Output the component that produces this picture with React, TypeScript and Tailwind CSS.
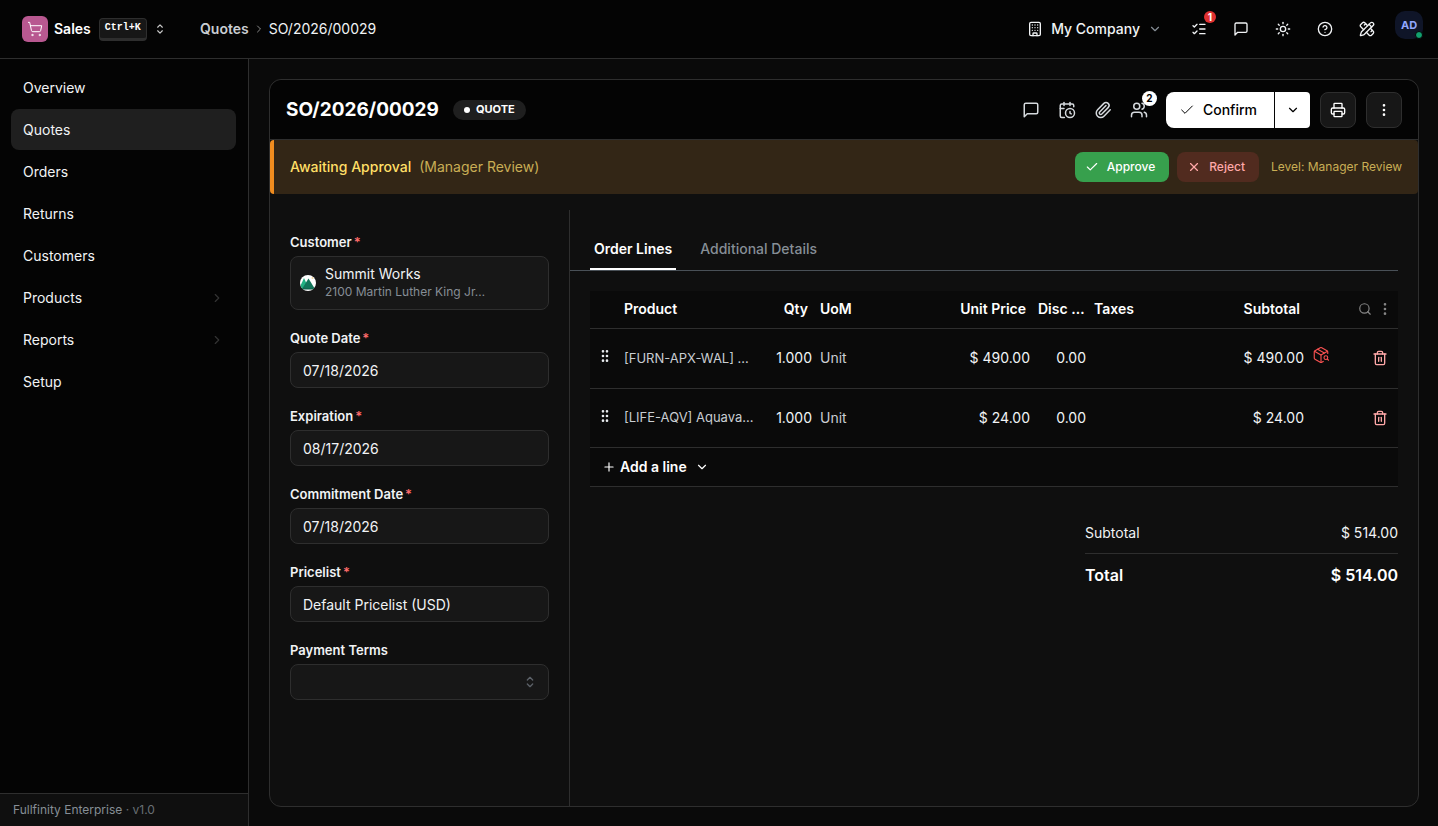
import React, { useState } from "react";
import {
  Building,
  CalendarClock,
  Check,
  ChevronDown,
  ChevronRight,
  CircleHelp,
  EllipsisVertical,
  GripVertical,
  ListChecks,
  PackageSearch,
  Paperclip,
  PencilRuler,
  Plus,
  Printer,
  Search,
  ShoppingCart,
  Sun,
  Trash2,
  Users,
  X,
} from "lucide-react";
import { TbSelector } from "react-icons/tb";

type NavItem = { label: string; hasChildren?: boolean };

type OrderLine = {
  id: number;
  product: string;
  qty: string;
  uom: string;
  price: string;
  disc: string;
  subtotal: string;
  shortage?: boolean;
};

const navItems: NavItem[] = [
  { label: "Overview" },
  { label: "Quotes" },
  { label: "Orders" },
  { label: "Returns" },
  { label: "Customers" },
  { label: "Products", hasChildren: true },
  { label: "Reports", hasChildren: true },
  { label: "Setup" },
];

const orderLines: OrderLine[] = [
  {
    id: 1,
    product: "[FURN-APX-WAL] …",
    qty: "1.000",
    uom: "Unit",
    price: "$ 490.00",
    disc: "0.00",
    subtotal: "$ 490.00",
    shortage: true,
  },
  {
    id: 2,
    product: "[LIFE-AQV] Aquava…",
    qty: "1.000",
    uom: "Unit",
    price: "$ 24.00",
    disc: "0.00",
    subtotal: "$ 24.00",
  },
];

function MessageIcon({ size }: { size: number }) {
  return (
    <svg
      width={size}
      height={size}
      viewBox="0 0 24 24"
      fill="none"
      stroke="currentColor"
      strokeWidth="2"
      strokeLinecap="round"
      strokeLinejoin="round"
      aria-hidden="true"
    >
      <path d="M21 15a2 2 0 0 1-2 2H7l-4 4V5a2 2 0 0 1 2-2h14a2 2 0 0 1 2 2z" />
    </svg>
  );
}

function CustomerLogo() {
  return (
    <svg width="16" height="16" viewBox="0 0 16 16" className="shrink-0" aria-hidden="true">
      <clipPath id="customer-logo">
        <circle cx="8" cy="8" r="8" />
      </clipPath>
      <g clipPath="url(#customer-logo)">
        <rect width="16" height="16" fill="#ffffff" />
        <path d="M-1 14 4 3l5 11z" fill="#22b183" />
        <path d="M2 14 8.500 3.500 15 14z" fill="#12755a" />
        <rect y="13.500" width="16" height="1" fill="#0f5f49" />
        <circle cx="12.500" cy="3" r="1" fill="#f3d9a0" />
      </g>
    </svg>
  );
}

function TopBar() {
  const iconButton = "relative flex h-[34px] w-[34px] items-center justify-center text-[#f1f3f5]";
  return (
    <header className="flex h-[59px] shrink-0 items-center border-b border-[#2e2e2e] bg-[#040404] pr-3 pl-[22px]">
      <button type="button" className="flex w-[178px] items-center text-left">
        <span className="flex h-[26px] w-[26px] items-center justify-center rounded-md bg-[#b85890] text-white">
          <ShoppingCart size={16} strokeWidth={1.5} />
        </span>
        <span className="ml-1.5 text-sm font-semibold text-white">Sales</span>
        <kbd className="ml-2 flex h-[23px] items-start rounded-sm border border-b-[3px] border-[#2e2e2e] bg-[#171717] px-[5px] pt-px font-['Liberation_Mono',monospace] text-[10px] leading-4 font-bold text-white">
          Ctrl+K
        </kbd>
        <TbSelector size={14} className="ml-1.5 text-[#c9c9c9]" />
      </button>
      <nav className="flex items-center text-sm" aria-label="Breadcrumb">
        <a href="#quotes" className="font-semibold text-[#c9cdd2]">
          Quotes
        </a>
        <ChevronRight size={12} className="mx-1 text-[#8a8a8a]" />
        <span className="text-[#f1f3f5]">SO/2026/00029</span>
      </nav>
      <div className="ml-auto flex items-center self-stretch">
        <button type="button" className="mr-5 flex items-center text-sm font-medium text-[#f1f3f5]">
          <Building size={16} />
          <span className="mr-2 ml-2">My Company</span>
          <ChevronDown size={14} className="text-[#868e96]" />
        </button>
        <div className="flex items-center gap-2 self-stretch">
          <button type="button" className={iconButton} aria-label="Activities">
            <ListChecks size={16} />
            <span className="absolute -top-px right-0 flex h-3 w-3 items-center justify-center rounded-full bg-[#e03131] text-[10px] font-bold text-white">
              1
            </span>
          </button>
          <button type="button" className={iconButton} aria-label="Messages">
            <MessageIcon size={16} />
          </button>
          <button type="button" className={iconButton} aria-label="Theme">
            <Sun size={16} />
          </button>
          <button type="button" className={iconButton} aria-label="Help">
            <CircleHelp size={16} />
          </button>
          <button type="button" className={iconButton} aria-label="Customize">
            <PencilRuler size={16} />
          </button>
          <button type="button" className="mt-[11px] flex w-[34px] justify-center self-start" aria-label="Account">
            <span className="relative flex h-7 w-7 items-center justify-center rounded-[10px] bg-[#0f1528] text-[11px] font-bold text-[#91a7ff]">
              AD
              <span className="absolute right-0 bottom-0 h-2 w-2 rounded-full border border-[#040404] bg-[#12a06f]" />
            </span>
          </button>
        </div>
      </div>
    </header>
  );
}

function Sidebar() {
  return (
    <aside className="flex w-[249px] shrink-0 flex-col border-r border-[#2e2e2e] bg-[#040404]">
      <nav className="flex flex-1 flex-col gap-px pt-2 pr-3 pl-[11px]" aria-label="Sales">
        {navItems.map((item) => (
          <a
            key={item.label}
            href={`#${item.label.toLowerCase()}`}
            className={`flex h-[41px] items-center justify-between rounded-lg px-3 text-sm text-[#f1f3f5] ${
              item.label === "Quotes" ? "bg-[#1f1f1f]" : ""
            }`}
          >
            {item.label}
            {item.hasChildren && <ChevronRight size={14} className="text-[#333333]" />}
          </a>
        ))}
      </nav>
      <footer className="flex h-[33px] items-center border-t border-[#2e2e2e] bg-[#0f0f0f] px-[13px] text-xs text-[#868e96]">
        Fullfinity Enterprise&nbsp;<span className="text-[#696f75]">· v1.0</span>
      </footer>
    </aside>
  );
}

function RecordHeader() {
  const iconButton = "relative flex h-9 w-9 items-center justify-center text-[#d5d9dd]";
  return (
    <div className="flex h-[60px] shrink-0 items-center rounded-t-xl border-b border-[#2e2e2e] bg-[#040404] px-4">
      <h1 className="text-[19px] leading-7 font-bold text-white">SO/2026/00029</h1>
      <span className="ml-3.5 flex h-5 items-center gap-1.5 rounded-full bg-[#1f1f1f] px-[11px] text-[11px] font-bold text-white">
        <span className="h-1.5 w-1.5 rounded-full bg-white" />
        QUOTE
      </span>
      <div className="ml-auto flex items-center">
        <button type="button" className={iconButton} aria-label="Comments">
          <MessageIcon size={18} />
        </button>
        <button type="button" className={iconButton} aria-label="Schedule activity">
          <CalendarClock size={18} />
        </button>
        <button type="button" className={iconButton} aria-label="Attachments">
          <Paperclip size={18} />
        </button>
        <button type="button" className={iconButton} aria-label="Followers">
          <Users size={18} />
          <span className="absolute -top-px right-0 flex h-[15px] w-[15px] items-center justify-center rounded-full bg-white text-[10px] font-bold text-black">
            2
          </span>
        </button>
        <button
          type="button"
          className="ml-[9px] flex h-9 items-center gap-2 rounded-l-lg bg-white pr-[17px] pl-[13px] text-sm font-medium text-black"
        >
          <Check size={16} strokeWidth={1.5} />
          Confirm
        </button>
        <button
          type="button"
          className="ml-px flex h-9 w-[35px] items-center justify-center rounded-r-sm bg-white text-black"
          aria-label="More confirm options"
        >
          <ChevronDown size={14} />
        </button>
        <button
          type="button"
          className="ml-2.5 flex h-9 w-9 items-center justify-center rounded-lg border border-[#2e2e2e] bg-[#171717] text-white"
          aria-label="Print"
        >
          <Printer size={16} />
        </button>
        <button
          type="button"
          className="ml-2.5 flex h-9 w-9 items-center justify-center rounded-lg border border-[#2e2e2e] bg-[#171717] text-white"
          aria-label="More actions"
        >
          <EllipsisVertical size={16} />
        </button>
      </div>
    </div>
  );
}

function ApprovalBanner() {
  return (
    <div className="flex h-[54px] shrink-0 items-center rounded-sm border-l-4 border-[#f08c1f] bg-[#332616] px-4">
      <span className="text-sm font-medium text-[#ffdf66]">Awaiting Approval</span>
      <span className="ml-2 text-sm text-[#c9ae55]">(Manager Review)</span>
      <div className="ml-auto flex items-center gap-2">
        <button
          type="button"
          className="flex h-[30px] items-center gap-2 rounded-lg bg-[#37a04d] pr-3.5 pl-2.5 text-xs font-medium text-white"
        >
          <Check size={14} />
          Approve
        </button>
        <button
          type="button"
          className="flex h-[30px] items-center gap-2 rounded-lg bg-[#512b1f] pr-3.5 pl-2.5 text-xs font-medium text-[#ffa8a8]"
        >
          <X size={14} />
          Reject
        </button>
        <span className="ml-1 text-xs text-[#c9ae55]">Level: Manager Review</span>
      </div>
    </div>
  );
}

function FieldLabel({ htmlFor, label, required }: { htmlFor: string; label: string; required?: boolean }) {
  return (
    <label htmlFor={htmlFor} className="mb-1 block text-[13px] leading-5 font-semibold text-[#f1f3f5]">
      {label}
      {required && <span className="ml-0.5 text-[#ff6b6b]">*</span>}
    </label>
  );
}

function TextField({ id, label, value }: { id: string; label: string; value: string }) {
  const [text, setText] = useState(value);
  return (
    <div>
      <FieldLabel htmlFor={id} label={label} required />
      <input
        id={id}
        type="text"
        value={text}
        onChange={(e) => setText(e.target.value)}
        className="block h-9 w-full rounded-lg border border-[#2e2e2e] bg-[#171717] px-3 text-sm text-[#f1f3f5]"
      />
    </div>
  );
}

function QuoteForm() {
  return (
    <form className="flex w-[300px] shrink-0 flex-col gap-[18px] border-r border-[#2e2e2e] px-5 pt-[22px]">
      <div>
        <FieldLabel htmlFor="customer" label="Customer" required />
        <button
          id="customer"
          type="button"
          className="flex h-[54px] w-full items-center gap-[9px] rounded-lg border border-[#2e2e2e] bg-[#171717] px-[9px] text-left"
        >
          <CustomerLogo />
          <span className="min-w-0">
            <span className="block truncate text-sm leading-[18px] text-[#f1f3f5]">Summit Works</span>
            <span className="block truncate text-xs leading-[18px] text-[#868e96]">2100 Martin Luther King Jr…</span>
          </span>
        </button>
      </div>
      <TextField id="quote-date" label="Quote Date" value="07/18/2026" />
      <TextField id="expiration" label="Expiration" value="08/17/2026" />
      <TextField id="commitment-date" label="Commitment Date" value="07/18/2026" />
      <TextField id="pricelist" label="Pricelist" value="Default Pricelist (USD)" />
      <div>
        <FieldLabel htmlFor="payment-terms" label="Payment Terms" />
        <div className="relative">
          <select
            id="payment-terms"
            className="block h-9 w-full appearance-none rounded-lg border border-[#2e2e2e] bg-[#171717] px-3 text-sm text-[#f1f3f5]"
          >
            <option value=""></option>
          </select>
          <TbSelector size={16} className="pointer-events-none absolute top-2.5 right-[11px] text-[#5c6168]" />
        </div>
      </div>
    </form>
  );
}

function NumberCell({ label, value }: { label: string; value: string }) {
  const [text, setText] = useState(value);
  return (
    <td>
      <input
        type="text"
        aria-label={label}
        value={text}
        onChange={(e) => setText(e.target.value)}
        className="block w-full bg-transparent text-right text-[#f1f3f5]"
      />
    </td>
  );
}

function OrderLinesTable() {
  return (
    <div className="bg-[#0a0a0a]">
      <table className="w-full table-fixed border-collapse text-sm">
        <colgroup>
          <col className="w-[26px]" />
          <col className="w-[152px]" />
          <col className="w-11" />
          <col />
          <col className="w-[110px]" />
          <col className="w-14" />
          <col />
          <col className="w-[110px]" />
          <col className="w-[94px]" />
        </colgroup>
        <thead>
          <tr className="h-[37px] border-b border-[#2e2e2e] text-left text-white [&>th]:font-semibold">
            <th aria-label="Reorder" />
            <th className="px-2">Product</th>
            <th className="pr-1 text-right">Qty</th>
            <th className="px-2">UoM</th>
            <th className="pr-1 text-right">Unit Price</th>
            <th className="pl-2 whitespace-nowrap">Disc …</th>
            <th className="px-2">Taxes</th>
            <th className="pr-1 text-right">Subtotal</th>
            <th>
              <div className="flex items-center justify-end gap-[5px] pr-[5px] text-[#868686]">
                <button type="button" aria-label="Search lines">
                  <Search size={14} />
                </button>
                <button type="button" aria-label="Column options">
                  <EllipsisVertical size={16} />
                </button>
              </div>
            </th>
          </tr>
        </thead>
        <tbody>
          {orderLines.map((line) => (
            <tr key={line.id} className="h-[59px] border-b border-[#2e2e2e] first:h-[60px]">
              <td>
                <button type="button" className="mb-1 ml-[7px] block text-[#e9ecef]" aria-label="Drag line">
                  <GripVertical size={16} strokeWidth={2} />
                </button>
              </td>
              <td className="px-2 text-[13px] whitespace-nowrap text-[#c9cdd2]">{line.product}</td>
              <NumberCell label="Quantity" value={line.qty} />
              <td className="px-2 text-[#c9cdd2]">{line.uom}</td>
              <NumberCell label="Unit price" value={line.price} />
              <NumberCell label="Discount" value={line.disc} />
              <td />
              <td className="text-right text-[#f1f3f5]">{line.subtotal}</td>
              <td>
                <div className="flex items-center pr-2.5 pl-2">
                  {line.shortage && (
                    <button type="button" className="mb-1.5 text-[#fa5252]" aria-label="Check availability">
                      <PackageSearch size={18} strokeWidth={1.5} />
                    </button>
                  )}
                  <button type="button" className="ml-auto text-[#ffa8a8]" aria-label="Delete line">
                    <Trash2 size={16} />
                  </button>
                </div>
              </td>
            </tr>
          ))}
        </tbody>
      </table>
      <div className="flex h-[39px] items-center border-b border-[#2e2e2e] px-3">
        <button type="button" className="flex items-center text-sm font-semibold text-white">
          <Plus size={14} className="mr-1" />
          Add a line
          <ChevronDown size={14} className="ml-2" />
        </button>
      </div>
    </div>
  );
}

function OrderPanel() {
  return (
    <section className="min-w-0 flex-1 pt-5 pr-5">
      <div className="flex gap-5 border-b border-[#495057] pl-5" role="tablist">
        <button
          type="button"
          role="tab"
          aria-selected="true"
          className="h-10 border-b-2 border-white px-1 text-sm font-semibold text-white"
        >
          Order Lines
        </button>
        <button
          type="button"
          role="tab"
          aria-selected="false"
          className="h-10 border-b-2 border-transparent px-1 text-sm font-medium text-[#868e96]"
        >
          Additional Details
        </button>
      </div>
      <div className="pt-5 pl-5">
        <OrderLinesTable />
        <dl className="mt-[34px] ml-auto w-[313px] text-[#f1f3f5]">
          <div className="flex justify-between border-b border-[#2e2e2e] pb-2 text-sm leading-6">
            <dt>Subtotal</dt>
            <dd>$ 514.00</dd>
          </div>
          <div className="flex justify-between pt-[9px] text-base font-semibold text-white">
            <dt>Total</dt>
            <dd>$ 514.00</dd>
          </div>
        </dl>
      </div>
    </section>
  );
}

export default function App() {
  return (
    <div className="flex h-screen flex-col bg-[#0a0a0a] font-[Inter,sans-serif]">
      <TopBar />
      <div className="flex min-h-0 flex-1">
        <Sidebar />
        <main className="flex min-w-0 flex-1 p-5 pr-[19px] pb-[19px]">
          <div className="flex min-w-0 flex-1 flex-col rounded-xl border border-[#2e2e2e] bg-[#0f0f0f]">
            <RecordHeader />
            <ApprovalBanner />
            <div className="mt-4 flex min-h-0 flex-1">
              <QuoteForm />
              <OrderPanel />
            </div>
          </div>
        </main>
      </div>
    </div>
  );
}
